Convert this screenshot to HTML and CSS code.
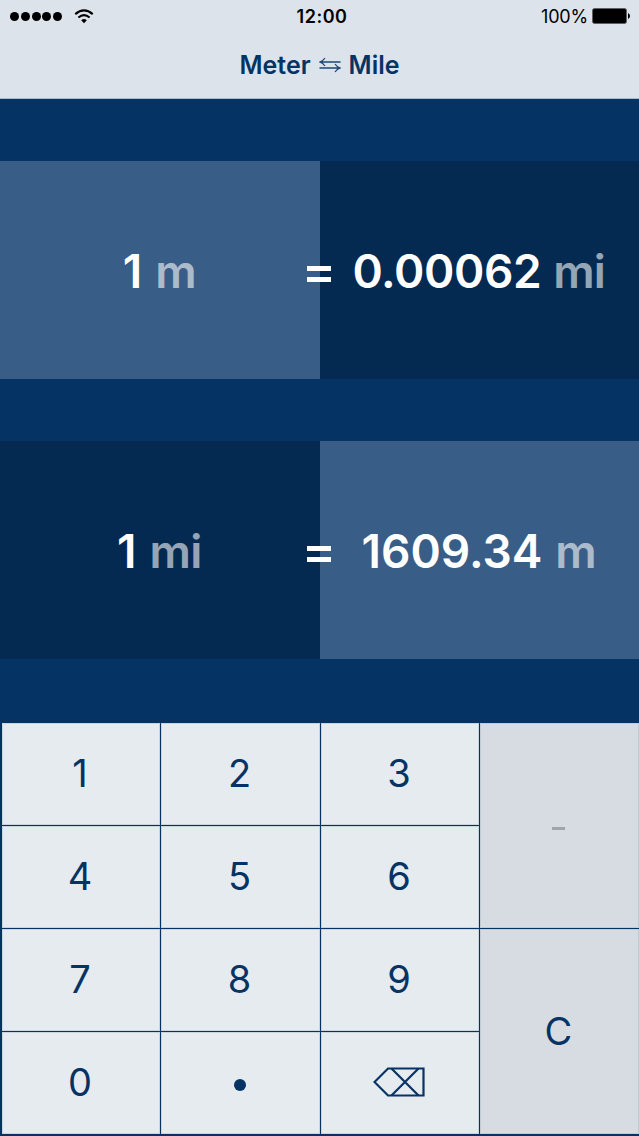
FILE: index.html
```
<!DOCTYPE html>
<html lang="en">
<head>
    <meta charset="UTF-8">
    <meta name="viewport" content="width=device-width, initial-scale=1.0">
    <title>Meter - Mile</title>
    <link rel="stylesheet" href="styles.css">
</head>
<body>
    <header class="header">
        <div class="status-bar">
            <div class="signal">
                <span class="dot"></span>
                <span class="dot"></span>
                <span class="dot"></span>
                <span class="dot"></span>
                <span class="dot"></span>
                <svg class="wifi" width="20" height="15" viewBox="0 0 20 15">
                    <path d="M1.3 5.1 Q10 -2.3 18.7 5.1" fill="none" stroke="#000" stroke-width="2.1"/>
                    <path d="M4.4 8.5 Q10 3.7 15.6 8.5" fill="none" stroke="#000" stroke-width="2.1"/>
                    <path d="M7.2 11.2 Q10 8.6 12.8 11.2 L10 14.3 Z" fill="#000"/>
                </svg>
            </div>
            <div class="time">12:00</div>
            <div class="power">
                <span>100%</span>
                <svg width="39" height="16" viewBox="0 0 39 16">
                    <rect x="0.5" y="0.5" width="34" height="15" rx="2" fill="#000" stroke="#5d6165"/>
                    <path d="M36 5 Q38 6 38 8 Q38 10 36 11 Z" fill="#000"/>
                </svg>
            </div>
        </div>
        <h1 class="title">
            <span>Meter</span>
            <svg width="22" height="16" viewBox="0 0 22 16" fill="none" stroke="#1f4673" stroke-width="1.3">
                <path d="M21.5 5 H1 M6 1 Q4 4 0.8 5 Q4 6 6 9"/>
                <path d="M0.5 11 H21 M16 7 Q18 10 21.2 11 Q18 12 16 15"/>
            </svg>
            <span>Mile</span>
        </h1>
    </header>

    <main class="conversions">
        <section class="conversion">
            <div class="side light"><span class="value">1</span><span class="unit">m</span></div>
            <div class="side dark long"><span class="value">0.00062</span><span class="unit">mi</span></div>
            <span class="equals"></span>
        </section>
        <section class="conversion">
            <div class="side dark"><span class="value">1</span><span class="unit">mi</span></div>
            <div class="side light"><span class="value">1609.34</span><span class="unit">m</span></div>
            <span class="equals"></span>
        </section>
    </main>

    <div class="keypad">
        <button class="key">1</button>
        <button class="key">2</button>
        <button class="key">3</button>
        <button class="key tall" aria-label="minus"><span class="minus"></span></button>
        <button class="key">4</button>
        <button class="key">5</button>
        <button class="key">6</button>
        <button class="key">7</button>
        <button class="key">8</button>
        <button class="key">9</button>
        <button class="key tall">C</button>
        <button class="key">0</button>
        <button class="key" aria-label="point"><span class="point"></span></button>
        <button class="key" aria-label="delete">
            <svg width="52" height="30" viewBox="0 0 52 30" fill="none" stroke="#053363" stroke-width="2.2">
                <path d="M15 1.5 H50.5 V28.5 H15 L1.5 15 Z"/>
                <path d="M18.5 1.5 L45.5 28.5 M45.5 1.5 L18.5 28.5"/>
            </svg>
        </button>
    </div>
</body>
</html>
```
FILE: styles.css
```
* {
    margin: 0;
    padding: 0;
    box-sizing: border-box;
}
body {
    font-family: Inter, "Liberation Sans", sans-serif;
    background-color: #053363;
    height: 1136px;
    display: flex;
    flex-direction: column;
    overflow: hidden;
}
.header {
    height: 99px;
    background-color: #dce3eb;
    border-bottom: 1px solid #a9bccd;
}
.status-bar {
    height: 32px;
    padding: 0 8px 0 10px;
    display: grid;
    grid-template-columns: 1fr auto 1fr;
    align-items: center;
    color: #000;
    font-size: 18px;
}
.signal {
    display: flex;
    align-items: center;
    gap: 1.8px;
}
.dot {
    width: 9px;
    height: 9px;
    border-radius: 50%;
    background-color: #000;
}
.wifi {
    margin-left: 10px;
}
.time {
    font-weight: 600;
    letter-spacing: 0.5px;
    margin-left: 3px;
}
.power {
    display: flex;
    align-items: center;
    justify-content: flex-end;
    gap: 4px;
    letter-spacing: -0.2px;
}
.title {
    height: 66px;
    display: flex;
    align-items: center;
    justify-content: center;
    gap: 8px;
    font-size: 25px;
    font-weight: 600;
    color: #053363;
}
.conversions {
    padding: 62px 0;
    display: flex;
    flex-direction: column;
    gap: 62px;
}
.conversion {
    position: relative;
    height: 218px;
    display: grid;
    grid-template-columns: 319.5px 319.5px;
}
.side {
    display: flex;
    align-items: center;
    justify-content: center;
    gap: 13px;
    font-size: 46px;
    color: #fff;
    padding: 1px 1px 0 0;
}
.long {
    gap: 12px;
    letter-spacing: -0.4px;
}
.light {
    background-color: #385d87;
}
.dark {
    background-color: #052a51;
}
.value {
    font-weight: 600;
}
.unit {
    font-weight: 600;
    letter-spacing: -0.8px;
    opacity: 0.58;
}
/* equals sign sits over the seam of the two halves */
.equals {
    position: absolute;
    left: 307px;
    top: 105px;
    width: 24px;
    height: 16px;
    border-top: 5px solid #fff;
    border-bottom: 5px solid #fff;
}
.keypad {
    margin-top: 2px;
    height: 411px;
    padding-left: 2px;
    display: grid;
    grid-template-columns: 158px 159px 158px 1fr;
    grid-template-rows: repeat(4, 1fr);
    gap: 1px;
}
.key {
    border: none;
    display: flex;
    align-items: center;
    justify-content: center;
    background-color: #e6ebf0;
    color: #053363;
    font-family: inherit;
    font-size: 38px;
    padding: 0 2px 2px 0;
    /* softens the edge of the thin grid lines */
    box-shadow: inset 0 0 0 1px #c9d4de;
}
.tall {
    grid-row: span 2;
    background-color: #d7dce2;
    box-shadow: inset 0 0 0 1px #c2cad4;
}
.minus {
    width: 13px;
    height: 3px;
    margin-top: 7px;
    background-color: #a1a5ac;
}
.point {
    width: 12px;
    height: 12px;
    margin-top: 6px;
    border-radius: 50%;
    background-color: #053363;
}
```
